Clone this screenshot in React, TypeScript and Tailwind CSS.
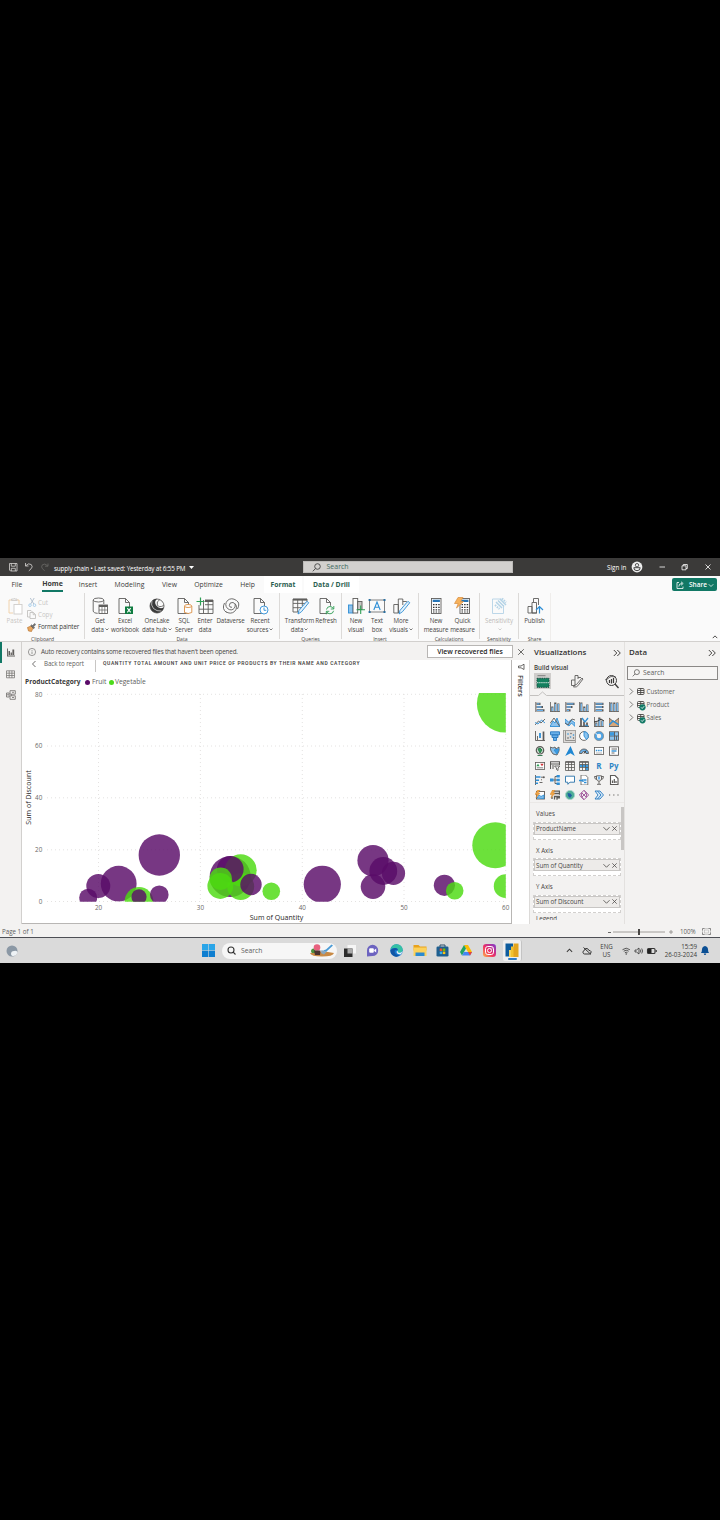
import React from "react";

type IconFn = () => React.ReactElement;

const G = "#5f5e5c";
const B = "#2f8fd6";
const LB = "#8cc3ee";

/* ---------- ribbon icons (18 x 18) ---------- */

function R({ children }: { children: React.ReactNode }) {
  return (
    <svg viewBox="0 0 18 18" className="h-[18px] w-[18px] shrink-0 overflow-visible" fill="none" stroke={G} strokeWidth="0.9">
      {children}
    </svg>
  );
}
const Pencil = () => <path d="M7 17l1-3.600 7.400-8.600q1.500-.7 2.300 1l-7.300 9z" fill="#e5f2fb" stroke={B} />;
const Sheet = () => <path d="M3 1.5h6.5l4 4v11H3zM9.5 1.5v4h4" />;
const GetData: IconFn = () => (
  <R>
    <ellipse cx="7.5" cy="3" rx="5.3" ry="2" />
    <path d="M2.2 3v11c0 1.4 2.2 2.3 4.5 2.3M12.8 3v4" />
    <rect x="8" y="8" width="8.5" height="8.5" fill="#fff" />
    <path d="M8 9h8.5" strokeWidth="2" />
    <path d="M8 13h8.5M11 9v7.5M13.8 9v7.5" strokeWidth="0.7" />
  </R>
);
const Excel: IconFn = () => (
  <R>
    <Sheet />
    <rect x="9" y="9.5" width="8" height="7.5" fill="#107c41" stroke="none" />
    <path d="M11.3 11.2l3.4 4.2M14.7 11.2l-3.4 4.2" stroke="#fff" strokeWidth="1.1" />
  </R>
);
const OneLake: IconFn = () => (
  <R>
    <circle cx="9" cy="9" r="7" />
    <path d="M2 8.500Q3 2 9 1.800 5.500 5 8.500 8.800q3 3.700 7.200 1.700-1.200 5.300-6.700 5.400Q2.500 15.500 2 8.500z" fill="#3a3a3a" stroke="none" />
    <path d="M12 2.500q-4 2-2.700 5.500 1.800 3 6.400.5" />
    <path d="M4 3.500q-1.500 5 1.500 8t8 2.500" stroke="#fff" strokeWidth="0.6" />
  </R>
);
const Sql: IconFn = () => (
  <R>
    <Sheet />
    <g stroke="#d98c3f" fill="#fff">
      <path d="M9.500 9v6.500q3.700 2 7.300 0V9" />
      <ellipse cx="13.100" cy="9" rx="3.600" ry="1.500" />
    </g>
  </R>
);
const EnterData: IconFn = () => (
  <R>
    <path d="M3 8v8.500h14V3H9M3 12.200h14M7.500 3v13.500M12.200 3v13.500M9 7.700h8" />
    <path d="M9 4h8" strokeWidth="2" />
    <path d="M4.500.5v8M.5 4.500h8" stroke="#2f9e55" strokeWidth="1.200" />
  </R>
);
const Dataverse: IconFn = () => (
  <R>
    <path d="M14.500 3.500q-5-3.500-9 0-3.500 4 0 8 4 3 7-.5 2-4-1.500-5.500-3.500-.5-3.700 2.800.3 2.500 2.700 2" />
    <path d="M3.500 14.500q5 3.300 9 0 3.800-3.800.5-8M2.500 6q-3 6 2 9.500M15.500 12q3-6-1-8.500" />
  </R>
);
const Recent: IconFn = () => (
  <R>
    <Sheet />
    <circle cx="13" cy="13" r="4" fill="#fff" stroke={B} />
    <path d="M13 10.500V13.300h2.300" stroke={B} />
  </R>
);
const Transform: IconFn = () => (
  <R>
    <path d="M2 2h14v5M2 2v13h6M2 10.700h9M2 6.400h13M6.700 3v12M11.300 3v6" />
    <path d="M2 2.700h14" strokeWidth="1.800" />
    <Pencil />
  </R>
);
const Refresh: IconFn = () => (
  <R>
    <Sheet />
    <circle cx="13" cy="13" r="4.300" fill="#fafafa" stroke="none" />
    <path d="M9.500 12.500q.6-3 3.500-3 2.400 0 3.400 2.300M16.800 9v3h-3M16.600 13.800q-.6 3-3.600 3-2.400 0-3.300-2.200M9.300 17.300v-3h3" stroke="#2f9e55" />
  </R>
);
const NewVisual: IconFn = () => (
  <R>
    <rect x="1.500" y="8" width="4.500" height="8" fill={LB} stroke={B} />
    <rect x="6" y="1.500" width="4.700" height="14.500" fill="#fff" />
    <rect x="10.700" y="4.500" width="4.300" height="8" fill="#c8c6c4" />
    <path d="M13.700 8.500v8.500M9.500 12.700h8.500" stroke="#2f9e55" strokeWidth="1.100" />
  </R>
);
const TextBox: IconFn = () => (
  <R>
    <rect x="1.500" y="3" width="15" height="12" stroke="#777" />
    <path d="M5.800 13l3.200-8 3.200 8M7 10.300h4" stroke={B} strokeWidth="1.100" />
    <g fill="#2b6f9f" stroke="none">
      <rect x=".6" y="2" width="2" height="2" /><rect x="15.500" y="2" width="2" height="2" />
      <rect x=".6" y="14" width="2" height="2" /><rect x="15.500" y="14" width="2" height="2" />
    </g>
  </R>
);
const MoreVisuals: IconFn = () => (
  <R>
    <path d="M1.800 7.500h4.500V16H1.800zM6.300 16V2h4.500v6M10.800 4.500h4" />
    <Pencil />
  </R>
);
const Calc = ({ x = 0 }: { x?: number }) => (
  <g transform={`translate(${x} 0)`}>
    <rect x="4.500" y="1.500" width="9.500" height="15" fill="#fff" />
    <rect x="5.700" y="2.700" width="7.200" height="2.300" fill="#2775b6" stroke="none" />
    <path d="M6 7.700h7M6 10.300h7M6 12.900h7M6 15h7" strokeDasharray="1.500 1.100" stroke="#333" strokeWidth="1.200" />
  </g>
);
const NewMeasure: IconFn = () => (<R><Calc /></R>);
const QuickMeasure: IconFn = () => (
  <R>
    <Calc x={1.500} />
    <path d="M4 .5h5L6.500 4.500h3l-7 6.500 1.700-4.500H.500z" fill="#f7b25b" stroke="#d98c3f" strokeWidth="0.700" />
  </R>
);
const Sensitivity: IconFn = () => (
  <R>
    <g stroke="#b4d3e6">
      <path d="M2.500 2h9M2.500 2v14.500h11V8" />
      <path d="M6 5l6 6M8 3.500l6 6M10 2l6 6" strokeWidth="1.500" />
      <path d="M12 1.500l4 4M5 8l4.500 4" strokeWidth="2" strokeDasharray="1.500 1" />
    </g>
  </R>
);
const Publish: IconFn = () => (
  <R>
    <path d="M2 9.500h4v6.500H2zM6 16V5.500h4.500V16zM7.500 5V1.500h5V8M6 16h5" />
    <path d="M13.500 16.500v-6M10 13l3.500-3.500L17 13" stroke={B} strokeWidth="1.200" />
  </R>
);

interface Tool { w: string; icon: IconFn; a: string; b?: string; caret?: boolean; dim?: boolean }
interface Group { w: string; pad: string; name: string; tools: Tool[] }

const groups: Group[] = [
  { w: "w-[195px]", pad: "pl-[3px]", name: "Data", tools: [
    { w: "w-[24px]", icon: GetData, a: "Get", b: "data", caret: true },
    { w: "w-[26px]", icon: Excel, a: "Excel", b: "workbook" },
    { w: "w-[38px]", icon: OneLake, a: "OneLake", b: "data hub", caret: true },
    { w: "w-[16px]", icon: Sql, a: "SQL", b: "Server" },
    { w: "w-[26px]", icon: EnterData, a: "Enter", b: "data" },
    { w: "w-[25px]", icon: Dataverse, a: "Dataverse" },
    { w: "w-[34px]", icon: Recent, a: "Recent", b: "sources", caret: true },
  ] },
  { w: "w-[62px]", pad: "pl-[0.500px]", name: "Queries", tools: [
    { w: "w-[38px]", icon: Transform, a: "Transform", b: "data", caret: true },
    { w: "w-[15px]", icon: Refresh, a: "Refresh" },
  ] },
  { w: "w-[77px]", pad: "pl-[3px]", name: "Insert", tools: [
    { w: "w-[22px]", icon: NewVisual, a: "New", b: "visual" },
    { w: "w-[20px]", icon: TextBox, a: "Text", b: "box" },
    { w: "w-[28px]", icon: MoreVisuals, a: "More", b: "visuals", caret: true },
  ] },
  { w: "w-[61px]", pad: "pl-[3px]", name: "Calculations", tools: [
    { w: "w-[28px]", icon: NewMeasure, a: "New", b: "measure" },
    { w: "w-[25px]", icon: QuickMeasure, a: "Quick", b: "measure" },
  ] },
  { w: "w-[39px]", pad: "pl-0", name: "Sensitivity", tools: [
    { w: "w-[38px]", icon: Sensitivity, a: "Sensitivity", b: "", caret: true, dim: true },
  ] },
  { w: "w-[32px]", pad: "pl-0", name: "Share", tools: [
    { w: "w-[31px]", icon: Publish, a: "Publish" },
  ] },
];

function Chevron({ className, d = "M1 3l3 3 3-3", w = 1 }: { className: string; d?: string; w?: number }) {
  return (
    <svg viewBox="0 0 8 8" className={className} fill="none" stroke="currentColor" strokeWidth={w}>
      <path d={d} />
    </svg>
  );
}

function RibbonTool({ t }: { t: Tool }) {
  const Icon = t.icon;
  return (
    <div className={`${t.w} flex shrink-0 flex-col items-center whitespace-nowrap tracking-[-0.100px] ${t.dim ? "text-[#bdbbb9]" : "text-[#484644]"}`}>
      <Icon />
      <span className="mt-[0.500px] h-[9px] text-[6.200px] leading-[9px]">{t.a}</span>
      <span className="flex h-[9px] items-center text-[6.200px] leading-[9px]">
        {t.b}
        {t.caret && <Chevron className="ml-px size-[4px]" w={1.400} />}
      </span>
    </div>
  );
}

function TitleBar() {
  return (
    <div className="flex h-[18px] items-center bg-[#3b3a39] text-[6.300px] text-white">
      <svg viewBox="0 0 46 12" className="ml-[7px] h-[12px] w-[46px] shrink-0" fill="none" stroke="#d8d6d4" strokeWidth="0.800">
        <path d="M2.500 2.500h7.500v7.500h-6.500l-1-1zM4.300 2.500v2.700h4V2.500M4.300 10V7.300h4V10" />
        <path d="M18.500 2v3h3M18.700 4.800q3-3.300 5.600-1.200 2 2.300-.3 4.300l-2.200 2" />
        <path d="M41 2.500v2.700h-3M40.700 4.800q-3-3-5.300-1-1.800 2.200.2 4l2 2" stroke="#6b6967" />
      </svg>
      <span className="ml-[1px] w-[132px] whitespace-nowrap pt-[3px] tracking-[-0.140px]">supply chain • Last saved: Yesterday at 6:55 PM</span>
      <svg viewBox="0 0 5 3" className="ml-[3px] h-[3px] w-[5px]"><path d="M0 0h5L2.500 3z" fill="#fff" /></svg>
      <div className="ml-[109px] flex h-[12px] w-[210px] items-center border border-[#bdbbb9] bg-[#d2d0ce] pl-[8px] text-[7px] text-[#3f6a5e]">
        <svg viewBox="0 0 9 9" className="size-[9px]" fill="none" stroke="#444" strokeWidth="0.900"><circle cx="5.500" cy="3.500" r="2.800" /><path d="M3.500 5.500L.8 8.300" /></svg>
        <span className="ml-[5.500px]">Search</span>
      </div>
      <span className="ml-[94px] w-[20px] whitespace-nowrap pt-[1px]">Sign in</span>
      <svg viewBox="0 0 12 12" className="ml-[4px] size-[12px]"><circle cx="6" cy="6" r="5.400" fill="#eee" /><circle cx="6" cy="4.200" r="1.700" fill="none" stroke="#333" strokeWidth="0.800" /><path d="M2.800 6.700h6.400q0 3-3.200 3t-3.200-3z" fill="none" stroke="#333" strokeWidth="0.900" /></svg>
      <svg viewBox="0 0 56 8" className="ml-[15px] h-[8px] w-[56px]" fill="none" stroke="#fff" strokeWidth="0.800">
        <path d="M1.500 4h5.500M24 2.800h4v4h-4zM25.300 2.800V1.500h4v4H28M47.500 1.500l5 5M52.500 1.500l-5 5" />
      </svg>
    </div>
  );
}

function Tabs() {
  const tab = "shrink-0 whitespace-nowrap text-center";
  const plain = "shrink-0 whitespace-nowrap pt-[1.500px] text-center";
  return (
    <div className="flex h-[17px] items-center text-[6.800px] text-[#3b3a39]">
      <span className={`${plain} ml-[7px] w-[20px]`}>File</span>
      <span className={`${tab} ml-[15px] flex h-[16px] w-[21px] flex-col items-center justify-end self-start border-b-2 border-[#117865] pb-[1px] text-[7px] font-bold`}>Home</span>
      <span className={`${plain} ml-[13px] w-[24px]`}>Insert</span>
      <span className={`${plain} ml-[12px] w-[35px] tracking-[0.080px]`}>Modeling</span>
      <span className={`${plain} ml-[13px] w-[19px]`}>View</span>
      <span className={`${plain} ml-[14px] w-[31px]`}>Optimize</span>
      <span className={`${plain} ml-[15px] w-[17px]`}>Help</span>
      <span className={`${tab} ml-[8px] h-full w-[38px] bg-white font-bold leading-[17px] text-[#2a5e50]`}>Format</span>
      <span className={`${tab} ml-[2px] h-full w-[55px] bg-white font-bold leading-[17px] text-[#2a5e50]`}>Data / Drill</span>
      <div className="ml-[313px] flex h-[12.500px] w-[45px] shrink-0 items-center rounded-[2px] bg-[#117865] pl-[4px] text-[6.500px] font-semibold text-white">
        <svg viewBox="0 0 8 8" className="size-[8px]" fill="none" stroke="#fff" strokeWidth="0.800"><path d="M3 1.500H1v6h6V5.500M2.800 5.500q0-3 3.200-3M5 .8l2.200 1.700L5 4.300" /></svg>
        <span className="ml-[5px]">Share</span>
        <Chevron className="ml-[1px] size-[6px]" />
      </div>
    </div>
  );
}

function Ribbon() {
  return (
    <div className="flex h-[48px] text-[#484644]">
      <div className="flex w-[84px] shrink-0 flex-col">
        <div className="flex h-[42px] shrink-0 pt-[4px]">
          <div className="flex w-[27px] shrink-0 flex-col items-center pl-[2px] text-[6.200px] text-[#c8c6c4]">
            <R>
              <path d="M3 3h10v4M3 3v13h4" stroke="#f0cfa5" />
              <path d="M5.500 3.500V2h2q.7-1.500 1.500 0h2v1.500z" fill="#eee" stroke="#cfcdcb" />
              <rect x="8" y="7.500" width="8" height="9.500" fill="#fff" stroke="#cfcdcb" />
            </R>
            <span className="mt-[0.500px] leading-[9px]">Paste</span>
          </div>
          <div className="flex flex-col text-[6.200px] text-[#c8c6c4]">
            <div className="flex h-[11px] items-center pl-[1px]">
              <svg viewBox="0 0 9 9" className="mr-[1px] size-[9px]" fill="none" stroke="#a5b5c5" strokeWidth="0.800"><path d="M2.300 0l3.500 6M6.200 0L2.700 6" /><circle cx="2" cy="7.200" r="1.300" stroke="#9cc6e8" /><circle cx="6.500" cy="7.200" r="1.300" stroke="#9cc6e8" /></svg>
              Cut
            </div>
            <div className="flex h-[13px] items-center">
              <svg viewBox="0 0 9 9" className="mr-[2px] size-[9px]" fill="none" stroke="#bdbbb9" strokeWidth="0.800"><path d="M3 7H.500V.500H4L5.500 2M3 2.500h3.500l2 2v4H3zM6.200 2.500v2.200h2.200" /></svg>
              Copy
            </div>
            <div className="flex h-[12px] items-center whitespace-nowrap tracking-[-0.150px] text-[#3b3a39]">
              <svg viewBox="0 0 9 9" className="mr-[2px] size-[9px]"><path d="M.500 4.500L4 3l2 2-1.500 3.500L1.500 8z" fill="#e9a75f" stroke="#b06c26" strokeWidth="0.600" /><path d="M3.700 2.700l3 3 .9-.9-1-1L8.700 1.500 7.800.500 5.500 2.600l-.9-.8z" fill="#777" stroke="#444" strokeWidth="0.500" /></svg>
              Format painter
            </div>
          </div>
        </div>
        <span className="pl-[31px] text-[5.100px] leading-[8px]">Clipboard</span>
      </div>
      {groups.map((g) => (
        <div key={g.name} className={`${g.w} flex shrink-0 flex-col`}>
          <div className="flex h-[46px] flex-col border-l border-[#dcdad8]">
            <div className={`flex h-[42px] shrink-0 pt-[4px] ${g.pad}`}>
              {g.tools.map((t, i) => <RibbonTool key={i} t={t} />)}
            </div>
            <span className="text-center text-[5.100px] leading-[8px]">{g.name}</span>
          </div>
        </div>
      ))}
      <div className="flex flex-1 items-end justify-end border-l border-[#efedeb] pb-[1px] pr-[2px]">
        <Chevron className="size-[6px]" d="M1 5.500l3-3 3 3" w={1.300} />
      </div>
    </div>
  );
}

/* ---------- scatter chart ---------- */

type Dot = [number, number, number, "F" | "V"];
const dots: Dot[] = [
  [88.200, 897.700, 9, "F"],
  [98.300, 886, 12, "F"],
  [118.700, 883.700, 17.900, "F"],
  [159.300, 855, 20.700, "F"],
  [139, 901.300, 14.300, "V"],
  [139, 896.800, 7.600, "F"],
  [159.300, 894.700, 9.300, "F"],
  [230.200, 876.600, 20.500, "F"],
  [240.700, 870.200, 16, "V"],
  [240.700, 886.500, 13.500, "V"],
  [230.300, 869.200, 13.300, "F"],
  [220.300, 886, 12.900, "V"],
  [220.700, 878.700, 11.200, "V"],
  [251, 884.500, 10.700, "F"],
  [271.300, 891.300, 8.800, "V"],
  [322.300, 884.300, 18.600, "F"],
  [373, 860.600, 15.600, "F"],
  [383.300, 871, 13.900, "F"],
  [393.500, 873.300, 11.600, "F"],
  [373, 886.600, 12.300, "F"],
  [444.400, 885.300, 10.600, "F"],
  [454.700, 890.700, 8.800, "V"],
  [495.300, 845.200, 23, "V"],
  [505.700, 703.800, 28.800, "V"],
  [505.700, 886.200, 11.900, "V"],
];
const gridY: [number, string][] = [[694.300, "80"], [746, "60"], [797.800, "40"], [849.800, "20"], [901.500, "0"]];
const gridX: [number, string][] = [[98.500, "20"], [200.400, "30"], [302.300, "40"], [404, "50"], [505.700, "60"]];

function Scatter() {
  return (
    <svg viewBox="22 687 489 236" className="block h-[236px] w-[489px] shrink-0" fontFamily="'Open Sans', 'Noto Sans', sans-serif">
      <clipPath id="plot"><rect x="47" y="693" width="458.800" height="208.800" /></clipPath>
      <g stroke="#dddbd9" strokeWidth="0.800" strokeDasharray="1 3">
        {gridY.map(([y]) => <path key={y} d={`M47 ${y}H506`} />)}
        {gridX.map(([x]) => <path key={x} d={`M${x} 694V901`} />)}
      </g>
      <g clipPath="url(#plot)">
        {dots.map(([x, y, r, c], i) => (
          <circle key={i} cx={x} cy={y} r={r} fill={c === "F" ? "#590b68" : "#4cdb10"} fillOpacity={0.820} />
        ))}
      </g>
      <g fontSize="6.300" fill="#6a6866">
        {gridY.map(([y, t]) => <text key={t} x="42.300" y={y + 2.200} textAnchor="end">{t}</text>)}
        {gridX.map(([x, t]) => <text key={t} x={x} y="910.300" textAnchor="middle">{t}</text>)}
      </g>
      <g fontSize="7" fill="#252423">
        <text x="276.500" y="920" textAnchor="middle" textLength="53.500">Sum of Quantity</text>
        <text x="0" y="0" transform="translate(31 797.500) rotate(-90)" textAnchor="middle" textLength="54.500">Sum of Discount</text>
      </g>
    </svg>
  );
}

function LeftRail() {
  return (
    <div className="flex w-[22px] shrink-0 flex-col border-r border-[#d2d0ce] bg-[#f3f2f1]">
      <div className="flex h-[21px] items-center border-l-2 border-[#117865] pl-[5px]">
        <svg viewBox="0 0 8 9" className="h-[9px] w-[8px]" fill="#605e5c"><path d="M0 .500h.900v8H0zM0 7.600h8v.9H0zM1.500 3h1.500v4H1.500zM3.600 4.500h1.300V7H3.600zM5.400 1.500h1.800V7H5.400z" /></svg>
      </div>
      <div className="flex flex-col items-center gap-[11px] pt-[7px]">
        <svg viewBox="0 0 9 9" className="size-[9px]" fill="none" stroke="#7a7876" strokeWidth="0.800"><path d="M.500.800h8v7h-8zM.500 3.200h8M.500 5.500h8M3.200.800v7M5.900.800v7" /></svg>
        <svg viewBox="0 0 10 10" className="size-[10px]" fill="none" stroke="#7a7876" strokeWidth="0.900"><path d="M4 .700h5.300v3.500H4zM4 5.800h5.300v3.500H4zM.500 3h2.700v4H.500zM5.500 4.200v1.600M6 2.300h2M6 7.500h2M1 4.800h2" /></svg>
      </div>
    </div>
  );
}

function Report() {
  return (
    <div className="flex w-[508px] shrink-0 flex-col">
      <div className="flex h-[18px] shrink-0 items-center bg-[#f3f2f1] pt-[1px] text-[6.300px] text-[#484644]">
        <svg viewBox="0 0 8 8" className="ml-[6px] size-[8px]" fill="none" stroke="#605e5c" strokeWidth="0.600"><circle cx="4" cy="4" r="3.600" /><path d="M4 3.500v2.500M4 2v.8" /></svg>
        <span className="ml-[5px] w-[386px] whitespace-nowrap pt-[1px] tracking-[-0.170px]">Auto recovery contains some recovered files that haven&apos;t been opened.</span>
        <span className="flex h-[13px] w-[86px] items-center justify-center whitespace-nowrap border border-[#b8b6b4] bg-white pt-[1px] text-[6.800px] font-semibold text-[#252423]">View recovered files</span>
        <Chevron className="ml-[4px] size-[8px]" d="M1.200 1.200l5.600 5.600M6.800 1.200L1.200 6.800" w={0.800} />
      </div>
      <div className="flex h-[264px]">
        <div className="flex w-[490px] flex-col border-b border-r border-[#b8b6b4] bg-white">
          <div className="flex h-[14px] shrink-0 text-[6.200px] text-[#605e5c]">
            <Chevron className="ml-[8px] size-[8px]" d="M5.500 1L2.500 4l3 3" w={0.900} />
            <span className="ml-[6px] w-[51px] whitespace-nowrap leading-[8px] tracking-[-0.080px]">Back to report</span>
            <span className="h-[12px] w-px bg-[#c8c6c4]" />
            <span className="ml-[7px] whitespace-nowrap font-['Roboto','Open_Sans',sans-serif] text-[5px] font-semibold leading-[7px] tracking-[0.610px] text-[#484644]">QUANTITY TOTAL AMOUNT AND UNIT PRICE OF PRODUCTS BY THEIR NAME AND CATEGORY</span>
          </div>
          <div className="flex h-[13px] shrink-0 items-center pl-[3px] pt-[3px] text-[6.700px] text-[#605e5c]">
            <span className="w-[60px] whitespace-nowrap text-[6.600px] font-bold text-[#3b3a39]">ProductCategory</span>
            <span className="mr-[2px] size-[5px] rounded-full bg-[#5a0b69]" />
            <span className="w-[17px]">Fruit</span>
            <span className="mr-[1px] size-[5px] rounded-full bg-[#4cdb1a]" />
            <span>Vegetable</span>
          </div>
          <Scatter />
        </div>
        <div className="flex flex-1 flex-col items-center border-r border-[#dcdad8] bg-white pt-[3px]">
          <svg viewBox="0 0 8 8" className="size-[8px]" fill="none" stroke="#484644" strokeWidth="0.800"><path d="M7 1.200v5.300L4 4.800H1.500V3H4z" /></svg>
          <span className="mt-[4px] text-[7.300px] font-semibold leading-[9px] text-[#3b3a39] [writing-mode:vertical-rl]">Filters</span>
        </div>
      </div>
    </div>
  );
}

/* ---------- visual gallery (10 x 10 icons) ---------- */

const D = "#5c5a58";
const hbars = (a: number, b: number, c: number) => (
  <>
    <path d="M.800 0v10" stroke={D} strokeWidth="0.900" />
    <path d={`M1.500 1.800h${a}M1.500 5h${b}M1.500 8.300h${c}`} stroke={D} strokeWidth="2.200" />
    <path d={`M2 1.800h${a - 1.500}M2 5h${b - 2}M2 8.300h${c - 2}`} stroke="#69b0ea" strokeWidth="1.300" />
  </>
);
const vbars = (a: number, b: number, c: number) => (
  <>
    <path d="M0 9.500h10M.500 0v9.500" stroke={D} strokeWidth="0.800" />
    <path d={`M2.300 9.500v-${a}M5.300 9.500v-${b}M8.300 9.500v-${c}`} stroke={D} strokeWidth="2.200" />
    <path d={`M2.300 9v-${a - 1.500}M5.300 9v-${b - 2}M8.300 9v-${c - 1}`} stroke="#7cbcf0" strokeWidth="1.300" />
  </>
);
const gridIcon = (hl: boolean) => (
  <>
    {hl && <path d="M.500 3.500h9v6h-3V6h-6z" fill="#3d9be0" stroke="none" />}
    <path d="M.500.800h9v8.700h-9zM.500 3.500h9M.500 6.500h9M3.500.800v8.700M6.500.800v8.700" stroke={D} strokeWidth="0.800" />
    <path d="M.500 1h9" stroke={D} strokeWidth="1.400" />
  </>
);

const gallery: React.ReactNode[] = [
  hbars(4, 6.500, 8), vbars(5, 9, 8), hbars(8, 6, 4), vbars(9, 5, 7), hbars(8, 8, 8), vbars(9, 9, 9),
  <><path d="M0 8l3.500-4L6 6l4-4" stroke={D} /><path d="M0 5.500L3 7l3.500-4L10 6" stroke={B} /></>,
  <><path d="M0 9.500L3 4l2 2 2-5 3 8.500z" fill={LB} stroke={B} /><path d="M0 6.500L4 1l5.800 8.500" stroke={D} /></>,
  <><path d="M0 2l3.500 3L6 3l4 3v3.500L6.500 6 4 9 0 6z" fill={LB} stroke={B} /><path d="M0 6l3 2 4-6 3 1" stroke={D} /></>,
  <><path d="M0 9.500h10M2 9V1M5 9V4.500M8 9V5.500" stroke={D} strokeWidth="1.700" /><path d="M3 1l3 4 3-4M6 8l3 1" stroke={B} strokeWidth="1.300" /></>,
  <>{vbars(4, 9, 6)}<path d="M0 5l4-1 3-2 3 2" stroke="#222" /></>,
  <><path d="M0 1l5 4 5-4v8.500H0z" fill="#d9a778" stroke={D} /><path d="M0 8l4-4 6 4" stroke={B} strokeWidth="1.500" /></>,
  <><path d="M.500 0v9.500H10M2.500 9V5" stroke={D} /><path d="M5 7V2" stroke={B} strokeWidth="1.800" /><path d="M8.500 9.500V.500" stroke={D} strokeWidth="1.700" /></>,
  <><path d="M.500.800h9v3h-9z" fill="#69b0ea" stroke="#2878be" /><path d="M2 4h6v2.500H2zM3.500 6.500h3v3h-3z" fill="#69b0ea" stroke="#2878be" /></>,
  <><path d="M.500 0v9.500H10" stroke="#8a8886" /><g fill={D} stroke="none"><circle cx="3" cy="7" r=".8" /><circle cx="6" cy="2.500" r=".7" /><circle cx="8.500" cy="7" r=".7" /></g><g fill={B} stroke="none"><circle cx="3" cy="3" r=".8" /><circle cx="5.500" cy="6" r=".8" /><circle cx="8.500" cy="4" r=".8" /></g></>,
  <><circle cx="5" cy="5" r="4.400" fill="#fff" stroke={D} /><path d="M5 .600a4.400 4.400 0 0 1 2.500 8L5 5z" fill={LB} stroke={B} /></>,
  <><circle cx="5" cy="5" r="3.400" stroke="#4fa3e3" strokeWidth="2.300" /><circle cx="5" cy="5" r="4.700" stroke={D} strokeWidth="0.500" /><path d="M1 1.500L3.500 4" stroke="#fff" /></>,
  <><rect x=".5" y=".8" width="9" height="8.500" fill={LB} stroke={D} /><path d="M5.500.800v8.500M.500 5h9M7.500 5v4" stroke={D} /><path d="M1 1.300h4V4.500H1z" fill="#3d9be0" stroke="none" /></>,
  <><circle cx="5" cy="4.300" r="3.700" fill="#cfe3d6" stroke={D} strokeWidth="1.200" /><path d="M3 3l2-1 2 2-2 3zM2.500 9.500h5" fill="#2f9e55" stroke="#256e43" /></>,
  <><path d="M0 1l3 1 2-1 1 2 3-2v4L7 9 3 8 1 5z" fill={LB} stroke={D} /><path d="M4 4l5-1-2 5z" fill="#3d9be0" stroke={B} /></>,
  <path d="M5.500 0L9.800 10 5.500 7.200.200 10z" fill="#1f87d2" stroke="none" />,
  <><path d="M.500 7.500a4.500 4.500 0 0 1 9 0h-2.500a2 2 0 0 0-4 0z" fill="#69b0ea" stroke={D} /><path d="M5 7.500l2-3" stroke="#222" /></>,
  <><rect x=".4" y="1.500" width="9.200" height="7" fill="#fff" stroke={D} strokeWidth="0.800" /><path d="M1.800 4.500h6.500" stroke={B} strokeDasharray="1.500 .8" strokeWidth="1.700" /><path d="M2 7h6" stroke="#aaa" /></>,
  <><rect x=".5" y=".8" width="9" height="8.500" fill="#fff" stroke={D} /><path d="M2.500 3h5.500M2.500 7h3" stroke={D} /><path d="M2.500 5h5" stroke={B} strokeWidth="1.400" /></>,
  <><rect x=".4" y="1.500" width="9.200" height="7" fill="#fff" stroke={D} strokeWidth="0.800" /><path d="M1.300 5.200L3 2.700l1.600 2.500z" fill="#2f9e55" stroke="none" /><path d="M5.300 2.800h3.400L7 5.300z" fill="#d13438" stroke="none" /><path d="M1.800 6.800h6.400" stroke="#777" /></>,
  <><path d="M.500 8V.800h9V4M.500 3h9M2 5h2M2 7h2" stroke={D} strokeWidth="1.100" /><path d="M4.500 5h5.300L8 7v2.500L6.500 8.500V7z" fill="#fff" stroke={D} /></>,
  gridIcon(false), gridIcon(true),
  null, null,
  <><path d="M.500 0v10" stroke={D} /><path d="M.500 2h5M.500 5.300h3.500M.500 8.300h2.500" stroke={B} strokeWidth="1.400" /><path d="M4.500 7.500h3M6 4.800h1M8 2.200H6" stroke={D} /><circle cx="8.800" cy="2.200" r="1" fill={D} stroke="none" /></>,
  <><path d="M3 5h2V1.500h2M5 5h2M5 5v3.500h2" stroke={D} /><path d="M0 3.500h3.500v3H0zM6.500 0h3.300v2.500H6.500zM6.500 3.800h3.300v2.500H6.500zM6.500 7.500h3.300V10H6.500z" fill="#2f8fd6" stroke="none" /></>,
  <path d="M.500 1.200h9v6H5L2.800 9.300V7.200H.500z" fill="#fff" stroke="#2872a8" />,
  <><path d="M2 0h4.500l2.300 2.500V10H2z" fill="#fff" stroke={D} strokeWidth="0.800" /><path d="M0 5.500h4M4 4v3M5 5h2.500M5 7.500h2.500" stroke={B} strokeWidth="1.300" /></>,
  <><path d="M2.500.800h5V4q-.5 2-2.500 2.300Q3 6 2.500 4zM2.500 1.500H.500q0 3 2.300 3M7.500 1.500h2q0 3-2.300 3M5 6.300V9M3 9.300h4" stroke={D} /><path d="M4 1.500h2V4L5 5 4 4z" fill="#69b0ea" stroke="none" /></>,
  <><path d="M1.500.500H6l3 3v6H1.500z" fill="#fff" stroke={D} strokeWidth="1.100" /><path d="M3.500 8V5.500M5.300 8V4M7 8V6" stroke={D} strokeWidth="1.200" /></>,
  <><rect x="1.500" y="1.500" width="8" height="7.500" fill="#fff" stroke={D} /><path d="M2 8l2-3 2 1.500L9 5v3.500z" fill={LB} stroke={B} /><path d="M2.500 0L0 4.500h2L1 8l4-5H3L5 0z" fill="#f2a444" stroke="#c97f2b" strokeWidth="0.400" /></>,
  <><path d="M2 1.200h7.500v3.500M2 3.500h7M2 6.500V9M4.500 9.500V6.500H9.500v1.300H7V9.700" stroke={D} strokeWidth="1.300" /><path d="M2.500 0L0 4.500h2L1 8l4-5H3L5 0z" fill="#f2a444" stroke="#c97f2b" strokeWidth="0.400" /></>,
  <><circle cx="5" cy="5" r="4.600" fill="#4fae98" stroke="#a9d4c8" /><path d="M2.500 3l3 .5 1.500 2-2 2.500-2-2z" fill="#1f5fa0" stroke="none" /></>,
  <path d="M5 .300L9.700 5 5 9.700.300 5zM2.700 2.700l4.600 4.600M7.300 2.700L2.700 7.300M5 .300Q9 3 7.300 7.300M5 9.700Q1 7 2.700 2.700" stroke="#9b4f96" />,
  <path d="M1 1h5l3.500 4L6 9H1l3-4zM3.500 1L7 5 3.500 9" fill="#d7ebfa" stroke="#2878be" />,
  <path d="M0 5h10" stroke={D} strokeWidth="1.100" strokeDasharray="1.200 3" />,
];

function VizPane() {
  return (
    <div className="flex w-[95px] shrink-0 flex-col border-r border-[#e3e1df] bg-[#f3f2f1]">
      <div className="flex h-[21px] shrink-0 items-center pl-[4px] text-[7.900px] font-semibold text-[#323130]">
        <span className="w-[79px] whitespace-nowrap">Visualizations</span>
        <Chevron className="size-[8px]" d="M.800 1l3 3-3 3M4.300 1l3 3-3 3" w={0.900} />
      </div>
      <span className="h-[10px] shrink-0 pl-[4px] text-[6.200px] font-semibold leading-[9px] text-[#3b3a39]">Build visual</span>
      <div className="flex h-[16px] shrink-0 items-center pl-[4px]">
        <span className="flex h-[16px] w-[17px] items-center justify-center bg-[#cfcdcb]">
          <svg viewBox="0 0 14 13" className="h-[13px] w-[14px]"><path d="M1.500.700h8" stroke="#777" strokeWidth="0.900" /><path d="M1 3.300h12v9H1z" fill="#14805f" stroke="#184f40" strokeWidth="1" strokeDasharray="1.500 .8" /><path d="M1 7.700h12" stroke="#a9cfc2" strokeWidth="1.300" strokeDasharray="1.500 .6" /></svg>
        </span>
        <svg viewBox="0 0 14 14" className="ml-[19px] size-[14px]" fill="none" stroke={G} strokeWidth="0.900"><path d="M1.500 6v5.500h3.500V6zM5 6V1.500h3V5M8 3.500h3M6.500 10.500q-2.300 0-3 2.500 3.500.3 4.300-1.200L13 5l-1-1z" fill="#f3f2f1" /></svg>
        <svg viewBox="0 0 15 15" className="ml-[20px] size-[15px]" fill="none" stroke="#3b3a39" strokeWidth="1"><circle cx="7.500" cy="6.500" r="5" /><path d="M11 10l3.500 4" strokeWidth="1.300" /><path d="M5.500 9V6M7.500 9.500V5M9.500 9V4" strokeWidth="1.200" /><path d="M1 6l3-1.500 3-2 5 .5" strokeWidth="0.700" /></svg>
      </div>
      <svg viewBox="0 1 95 7" className="h-[7px] w-[95px] shrink-0" fill="none" stroke="#bdbbb9" strokeWidth="0.900"><path d="M0 7.500h8.500L12.500 4l4 3.500H94" /></svg>
      <div className="grid shrink-0 grid-cols-6 pl-[3px] pr-[3px] pt-[3.500px] [grid-auto-rows:14.700px]">
        {gallery.map((g, i) => (
          <div key={i} className="flex items-center justify-center">
            {i === 28 || i === 29 ? (
              <span className="text-[8px] font-bold leading-none text-[#2f86c6]">{i === 28 ? "R" : "Py"}</span>
            ) : (
              <span className={i === 14 ? "flex size-[13px] items-center justify-center border border-[#a5a3a1] bg-[#dddbd9]" : "flex"}>
                <svg viewBox="0 0 10 10" className="size-[10px]" fill="none" strokeWidth="0.900">{g}</svg>
              </span>
            )}
          </div>
        ))}
      </div>
      <div className="flex min-h-0 flex-1 justify-between overflow-hidden border-t border-[#eae8e6] pt-[2px]">
        <div className="flex w-[91px] flex-col pl-[3px] text-[6.200px] text-[#484644]">
          {[["Values", "ProductName"], ["X Axis", "Sum of Quantity"], ["Y Axis", "Sum of Discount"]].map(([k, v]) => (
            <div key={k} className="flex h-[36.400px] shrink-0 flex-col">
              <span className="h-[16.500px] pl-[3px] leading-[18px]">{k}</span>
              <div className="h-[18px] border border-dashed border-[#d2d0ce] bg-white">
                <div className="flex h-[12px] items-center border border-[#c8c6c4] bg-[#edebe9] pl-[1px]">
                  <span className="w-[67px] whitespace-nowrap">{v}</span>
                  <Chevron className="size-[7px]" d="M.500 2.500L4 6l3.500-3.500" w={0.900} />
                  <Chevron className="ml-[2px] size-[5px]" d="M.500.500l7 7M7.500.500l-7 7" w={1.200} />
                </div>
              </div>
            </div>
          ))}
          <span className="h-[6px] shrink-0 overflow-hidden pl-[3px] leading-[9px]">Legend</span>
        </div>
        <span className="mt-[2px] h-[43px] w-[3px] bg-[#c8c6c4]" />
      </div>
      <span className="h-[3px] shrink-0" />
    </div>
  );
}

function DataPane() {
  return (
    <div className="flex min-w-0 flex-1 flex-col bg-[#f3f2f1]">
      <div className="flex h-[21px] shrink-0 items-center pl-[4px] text-[7.900px] font-semibold text-[#323130]">
        <span className="w-[79px]">Data</span>
        <Chevron className="size-[8px]" d="M.800 1l3 3-3 3M4.300 1l3 3-3 3" w={0.900} />
      </div>
      <div className="ml-[2px] mt-[3px] flex h-[14px] w-[91px] shrink-0 items-center border border-[#8a8886] bg-[#f6f5f4] pl-[4px] text-[6.800px] text-[#605e5c]">
        <svg viewBox="0 0 9 9" className="size-[8px]" fill="none" stroke="#605e5c" strokeWidth="0.900"><circle cx="5.500" cy="3.500" r="2.800" /><path d="M3.500 5.500L.800 8.300" /></svg>
        <span className="ml-[3px]">Search</span>
      </div>
      <div className="flex flex-col pl-[3px] pt-[5.500px] text-[6.200px] text-[#605e5c]">
        {["Customer", "Product", "Sales"].map((n, i) => (
          <div key={n} className="flex h-[12.700px] items-center">
            <Chevron className="mr-[1px] size-[7px]" d="M2 .500L5.500 4 2 7.500" w={0.900} />
            <svg viewBox="0 0 11 11" className="size-[11px] overflow-visible" fill="none" stroke="#484644" strokeWidth="0.900">
              <rect x="1.500" y="2.500" width="6.500" height="6" rx="1" /><path d="M1.500 4.500H8M1.500 6.500H8M4.700 2.500v6" />
              {i > 0 && <><circle cx="6.500" cy="8.300" r="3.100" fill="#117865" stroke="none" /><path d="M5 8.300l1.200 1.200 2-2.300" stroke="#fff" strokeWidth="0.800" /></>}
            </svg>
            <span className="ml-[-0.500px] pt-[0.500px]">{n}</span>
          </div>
        ))}
      </div>
    </div>
  );
}

function StatusBar() {
  return (
    <div className="flex h-[14px] items-center border-b border-[#4d4f55] bg-[#f3f2f1] pt-[2px] text-[6.200px] text-[#605e5c]">
      <span className="w-[607px] whitespace-nowrap pl-[2px]">Page 1 of 1</span>
      <svg viewBox="0 0 68 8" className="h-[8px] w-[68px]" fill="none" stroke="#8a8886" strokeWidth="0.800"><path d="M1 4.500h3" stroke="#444" /><path d="M6 4h52" /><path d="M32 1v6" stroke="#484644" strokeWidth="2" /><path d="M62 4h4M64 2v4" /></svg>
      <span className="ml-[5px] w-[22px]">100%</span>
      <svg viewBox="0 0 9 7" className="h-[7px] w-[9px]" fill="none" stroke="#605e5c" strokeWidth="0.900"><path d="M.500 2.500V.500h2M6.500.500h2v2M8.500 4.500v2h-2M2.500 6.500h-2v-2" /><rect x=".5" y=".5" width="8" height="6" stroke="#aaa" strokeWidth="0.500" /><rect x="2.500" y="2" width="4" height="3" stroke="#aaa" strokeWidth="0.500" /></svg>
    </div>
  );
}

function Taskbar() {
  return (
    <div className="flex h-[25px] items-center bg-[#dadada] text-[6.200px] text-[#3b3a39]">
      <svg viewBox="0 0 12 12" className="ml-[6px] size-[12px]"><circle cx="6" cy="6" r="5.500" fill="#8b98a5" /><path d="M5 9q0-3 3-3 3-1 3.500 1.500Q10 11.500 6.500 11 5 10.500 5 9z" fill="#eef2f5" /></svg>
      <svg viewBox="0 0 13 13" className="ml-[184px] size-[13px]"><path d="M0 0h6.200v6.200H0zM6.800 0H13v6.200H6.800z" fill="#2aa5e8" /><path d="M0 6.800h6.200V13H0zM6.800 6.800H13V13H6.800z" fill="#0e7ed0" /></svg>
      <div className="ml-[7px] flex h-[16px] w-[115px] items-center rounded-full bg-[#f6f6f6] pl-[5px] text-[6.800px] text-[#605e5c]">
        <svg viewBox="0 0 9 9" className="size-[9px]" fill="none" stroke="#333" strokeWidth="1.100"><circle cx="4" cy="4" r="3" /><path d="M6.200 6.200l2.300 2.300" /></svg>
        <span className="ml-[5px] w-[69px] pt-[1px]">Search</span>
        <svg viewBox="0 0 24 13" className="h-[13px] w-[24px]"><path d="M0 9q12-3 24 0-1 3.500-12 3.500T0 9z" fill="#c88a45" /><path d="M2 5q3-2 4 4H2q-2-2 0-4z" fill="#4b8f3c" /><circle cx="7" cy="3.500" r="3.300" fill="#e8627f" /><path d="M4 6.500h6.500L10 11H5z" fill="#4a3330" /><path d="M13 6.500l3 1.500 7-6.500-1.500-1L16 5.500z" fill="#4a9bd6" /><path d="M11.500 6l5 2-2.500 2.500-3-1.500z" fill="#8aa7bd" /></svg>
      </div>
      <svg viewBox="0 0 12 12" className="ml-[7px] size-[12px]"><path d="M3.500 0H12v8.500H3.500z" fill="#f5f5f5" /><path d="M0 3.500h8.500V12H0z" fill="#2b2b2b" /><path d="M3.500 3.500h5v5h-5z" fill="#a9a9a9" /></svg>
      <svg viewBox="0 0 13 13" className="ml-[10px] size-[13px]"><path d="M1 12.500V6.500A5.600 5.600 0 1 1 6.500 12z" fill="#6c63c0" /><rect x="3.200" y="4.200" width="4.600" height="4.600" rx="1" fill="#fff" /><path d="M8.200 6l2-1.400v3.800L8.200 7z" fill="#fff" /></svg>
      <svg viewBox="0 0 13 13" className="ml-[11px] size-[13px]"><circle cx="6.500" cy="6.500" r="6.200" fill="#1476cf" /><path d="M.5 5.500Q2 .3 6.500.3q6 .5 6.200 5.700-.2 2.500-3.500 2.700-2.200 0-1.500-1.500Q8.500 4 5 4 2 4 .5 5.500z" fill="#35c1a4" /><path d="M4.500 7q0 4 5 4.500-2 1.500-4.500 1Q.8 11 .4 6.500 1.500 4 5 4q3 .2 2.800 2.500Q6 5 4.500 7z" fill="#1055a5" /><path d="M7.700 6.500q-.5 2.200 1.500 2.200 2 0 3.400-1.500-.5 2-2 3.300-3.500 0-4.100-2.500 0-1 1.200-1.500z" fill="#e8f4fb" /></svg>
      <svg viewBox="0 0 14 13" className="ml-[10px] h-[13px] w-[14px]"><path d="M.500 1h5l1.500 1.500h6.500v4H.500z" fill="#e8a21c" /><path d="M.500 3.500h13v8.500H.500z" fill="#fcd15a" /><path d="M2.500 8.500h9V12h-9z" fill="#2b8ad0" /></svg>
      <svg viewBox="0 0 13 13" className="ml-[9px] size-[13px]"><path d="M4 3V1h5v2" fill="none" stroke="#2d4f6a" /><rect x=".5" y="2.500" width="12" height="10" rx="1.300" fill="#1f5f8f" /><path d="M3.700 4.500h2.500V7H3.700z" fill="#f0532d" /><path d="M6.800 4.500h2.500V7H6.800z" fill="#7fba00" /><path d="M3.700 7.600h2.500v2.500H3.700z" fill="#38b0f0" /><path d="M6.800 7.600h2.500v2.500H6.800z" fill="#ffc20e" /></svg>
      <svg viewBox="0 0 12 11" className="ml-[11px] h-[11px] w-[12px]"><path d="M4 0h4l4 7H8z" fill="#fbbc04" /><path d="M4 0l2 3.500L2 10.500 0 7z" fill="#1fa463" /><path d="M4 7h8l-2 3.500H2z" fill="#4285f4" /><path d="M8 7h4l-2 3.500z" fill="#ea4335" /></svg>
      <svg viewBox="0 0 13 13" className="ml-[11px] size-[13px]">
        <defs><linearGradient id="ig" x1="0" y1="1" x2="1" y2="0"><stop offset="0" stopColor="#fdb54a" /><stop offset="0.450" stopColor="#ee2f65" /><stop offset="1" stopColor="#7a3bd0" /></linearGradient></defs>
        <rect width="13" height="13" rx="3.200" fill="url(#ig)" /><rect x="2.500" y="2.500" width="8" height="8" rx="2.300" fill="none" stroke="#fff" /><circle cx="6.500" cy="6.500" r="2" fill="none" stroke="#fff" /><circle cx="9" cy="4" r=".6" fill="#fff" />
      </svg>
      <div className="ml-[7px] flex h-[21px] w-[19px] flex-col items-center rounded-[2px] border-r border-[#c4c4c4] bg-[#efefef] pt-[3px]">
        <svg viewBox="0 0 14 14" className="size-[14px]"><path d="M.500.500h7.500v13H.500z" fill="#0d5c9e" /><path d="M4 7h5v7H4z" fill="#f6d45c" /><path d="M6 3.500h4V14H6z" fill="#f2c230" /><path d="M8.500.500h5V14h-5z" fill="#e3a51f" /></svg>
        <span className="mt-[1px] h-[2px] w-[9px] rounded-full bg-[#2f7cc4]" />
      </div>
      <Chevron className="ml-[44px] size-[7px]" d="M1 5.500l3-3 3 3" w={1.200} />
      <svg viewBox="0 0 10 8" className="ml-[9px] h-[8px] w-[10px]" fill="none" stroke="#333" strokeWidth="1"><path d="M2.500 7h5q2-.5 1.500-2.500-.7-1.300-2-1Q6 1 4 1.500 2.500 2 2.300 3.500.500 4 1 5.800q.5 1.200 1.500 1.200zM1.500.500l7.500 7" /></svg>
      <div className="ml-[6px] w-[17px] text-center leading-[8px]">ENG<br />US</div>
      <svg viewBox="0 0 36 10" className="ml-[6px] h-[10px] w-[36px]" fill="none" stroke="#333" strokeWidth="0.800">
        <path d="M1.500 3.700q3.700-3 7.400 0M2.700 5.200q2.500-2 5 0M3.900 6.700q1.300-1 2.600 0" /><circle cx="5.200" cy="8" r=".7" fill="#333" stroke="none" />
        <path d="M14 4h1.500L18 2v6l-2.500-2H14zM19.300 3.500q1 1.500 0 3M20.700 2.500q1.800 2.500 0 5" />
        <rect x="26.500" y="2.500" width="7.500" height="5" rx="1" strokeWidth="1.100" /><path d="M27 3h3.500v4H27zM34.700 4h1v2h-1z" fill="#222" stroke="none" />
      </svg>
      <div className="ml-[5px] w-[35px] whitespace-nowrap text-right leading-[8px]">15:59<br />26-03-2024</div>
      <svg viewBox="0 0 8 9" className="ml-[4px] h-[9px] w-[8px]"><path d="M4 0Q7 .5 7 3.500q0 2 1 3.500H0q1-1.500 1-3.500Q1 .5 4 0zM2.700 7.500h2.600Q5 9 4 9T2.700 7.500z" fill="#0b4f94" /></svg>
    </div>
  );
}

export default function App() {
  return (
    <div className="flex h-[1520px] w-[720px] flex-col overflow-hidden bg-black pt-[558px] font-['Open_Sans','Noto_Sans',sans-serif]">
      <TitleBar />
      <div className="flex h-[66px] flex-col border-b border-[#d2d0ce] bg-[#fafafa]">
        <Tabs />
        <Ribbon />
      </div>
      <div className="flex h-[282px] bg-[#f3f2f1]">
        <LeftRail />
        <Report />
        <VizPane />
        <DataPane />
      </div>
      <StatusBar />
      <Taskbar />
    </div>
  );
}
